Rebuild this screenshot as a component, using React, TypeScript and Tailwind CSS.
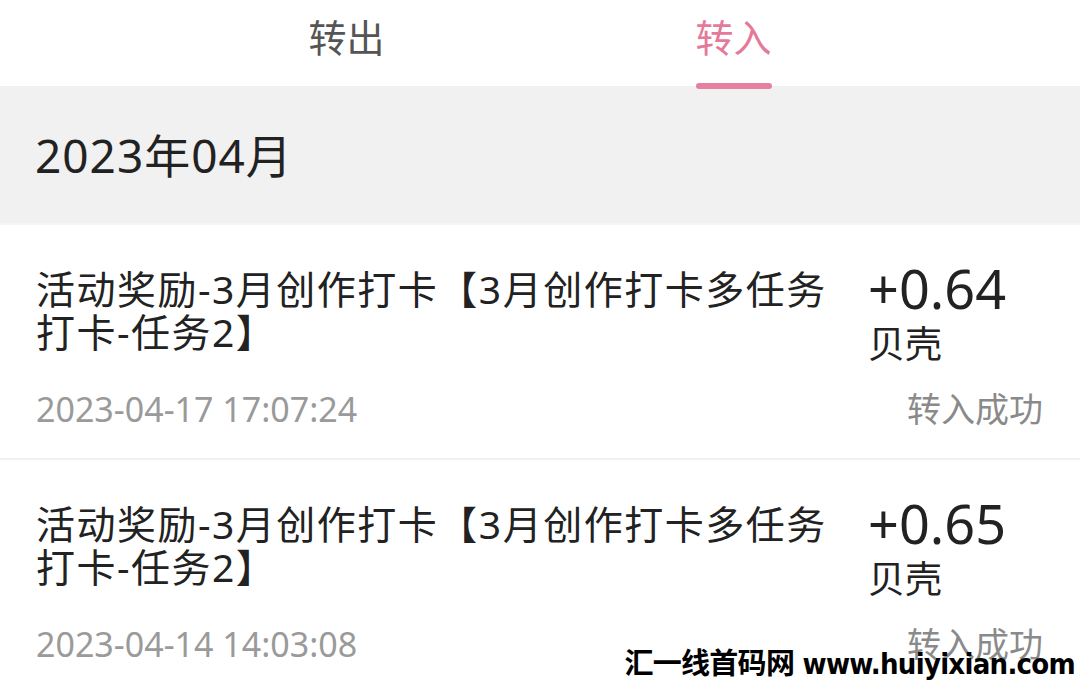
import React from "react";

const font = '"Noto Sans", "Noto Sans CJK SC", sans-serif';

type Item = { line1: string; line2: string; amount: string; date: string; status: string };

const items: Item[] = [
  {
    line1: "活动奖励-3月创作打卡【3月创作打卡多任务",
    line2: "打卡-任务2】",
    amount: "+0.64",
    date: "2023-04-17 17:07:24",
    status: "转入成功",
  },
  {
    line1: "活动奖励-3月创作打卡【3月创作打卡多任务",
    line2: "打卡-任务2】",
    amount: "+0.65",
    date: "2023-04-14 14:03:08",
    status: "转入成功",
  },
];

function Row({ item }: { item: Item }) {
  return (
    <div className="border-b-2 border-[#f0f0f0] bg-white pl-[36px] pr-[37px] pt-[35px] pb-[27px]">
      <div className="flex items-start justify-between">
        <div className="flex flex-col whitespace-nowrap pt-[7px] text-[39px] leading-[43px] tracking-[1.5px] text-[#222]">
          <span>{item.line1}</span>
          <span>{item.line2}</span>
        </div>
        <div className="flex w-[175px] flex-col">
          <div className="text-[54px] leading-[56px] text-[#222]">{item.amount}</div>
          <div className="mt-[6px] text-[37px] leading-[43px] text-[#222]">贝壳</div>
        </div>
      </div>
      <div className="mt-[23px] flex items-center justify-between">
        <div className="text-[34px] leading-[43px] text-[#9a9a9a]">{item.date}</div>
        <div className="text-[34px] leading-[43px] text-[#8a8a8a]">{item.status}</div>
      </div>
    </div>
  );
}

export default function App() {
  return (
    <div className="relative h-[684px] w-[1080px] overflow-hidden bg-white" style={{ fontFamily: font }}>
      <div className="flex h-[86px] justify-center bg-white">
        <div className="flex w-[387px] justify-center pt-[13px] text-[38px] leading-[48px] text-[#555]">转出</div>
        <div className="relative flex w-[387px] justify-center pt-[13px] text-[38px] leading-[48px] text-[#e5799b]">
          转入
          <div className="absolute left-1/2 top-[83px] z-10 h-[6px] w-[76px] -translate-x-1/2 rounded-full bg-[#e77f9f]" />
        </div>
      </div>
      <div className="flex h-[139px] items-center border-b-2 border-[#f5f5f5] bg-[#f1f1f1] pl-[35px] pt-[2px] text-[46px] tracking-[1px] text-[#222]">
        2023年04月
      </div>
      {items.map((it, i) => (
        <Row key={i} item={it} />
      ))}
      <div
        className="absolute bottom-[2px] right-[5px] text-[29px] font-bold leading-[36px] tracking-tight text-black"
        style={{ fontFamily: '"DejaVu Sans Condensed", "Noto Sans CJK SC", sans-serif' }}
      >
        汇一线首码网 www.huiyixian.com
      </div>
    </div>
  );
}
